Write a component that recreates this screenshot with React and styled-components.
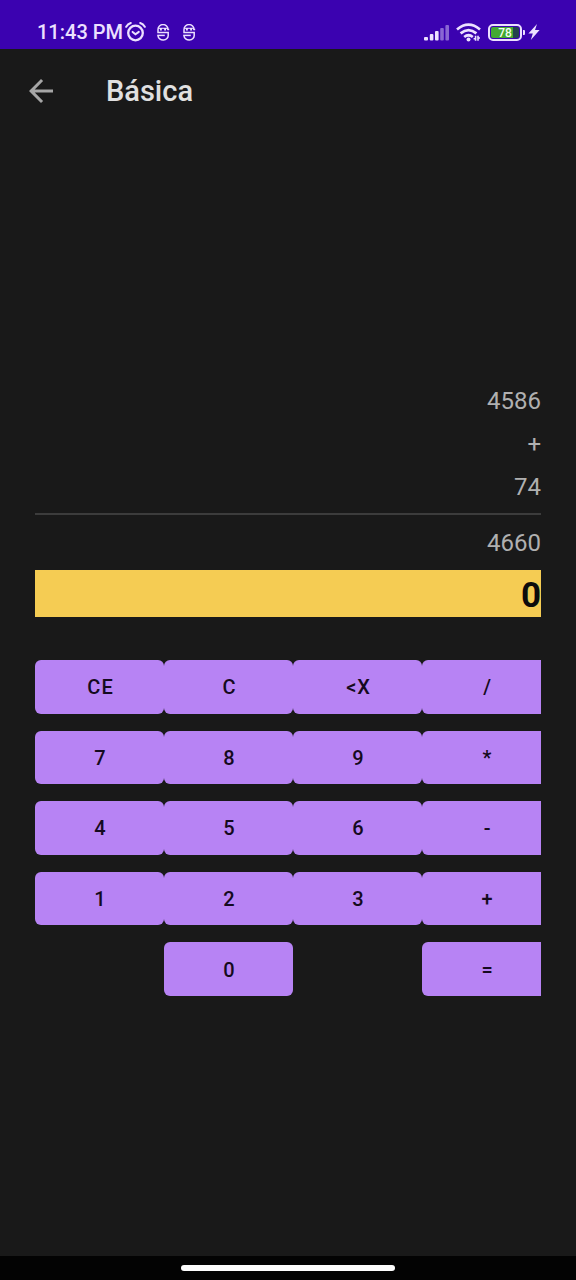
import React from "react";
import styled, { createGlobalStyle } from "styled-components";

const GlobalStyle = createGlobalStyle`
  *, *::before, *::after { box-sizing: border-box; }
  body {
    margin: 0;
    background: #191919;
    font-family: Roboto, "Liberation Sans", sans-serif;
  }
`;

const Screen = styled.div`
  display: flex;
  flex-direction: column;
  min-height: 100vh;
  background: #191919;
`;

const StatusBar = styled.div`
  display: flex;
  align-items: center;
  justify-content: space-between;
  height: 49px;
  padding: 15px 36px 0 37px;
  background: #3b02b0;
  color: #ece0ff;
`;

const StatusGroup = styled.div`
  display: flex;
  align-items: center;
  gap: ${(p) => p.$gap}px;
`;

const Clock = styled.time`
  font-size: 20px;
  font-weight: 500;
  line-height: 24px;
  margin-right: 2px;
`;

const Notifications = styled.div`
  display: flex;
  gap: 12px;
  margin-left: 10px;
`;

const Icon = styled.svg`
  display: block;
  flex: none;
`;

const BatteryShell = styled.div`
  display: flex;
  align-items: center;
  gap: 1px;

  &::after {
    content: "";
    width: 2px;
    height: 5px;
    border-radius: 0 1px 1px 0;
    background: #ece0ff;
  }
`;

const BatteryBody = styled.div`
  width: 34px;
  height: 17px;
  padding: 1px;
  border: 2px solid #ece0ff;
  border-radius: 5px;
`;

const BatteryLevel = styled.div`
  height: 100%;
  border-radius: 2px;
  background: linear-gradient(to right, #43a832 78%, #24424a 78%);
  color: #f4fff0;
  font-size: 12px;
  font-weight: 500;
  line-height: 12px;
  text-align: center;
`;

const AppBar = styled.header`
  display: flex;
  align-items: center;
  gap: 47px;
  height: 83px;
  padding: 0 23px;
`;

const BackButton = styled.button`
  padding: 0;
  border: 0;
  background: none;
  color: #a6a6a6;
  cursor: pointer;
`;

const Title = styled.h1`
  margin: 0;
  color: #e0e0e0;
  font-size: 29px;
  font-weight: 500;
  line-height: 38px;
`;

const Calculator = styled.main`
  flex: 1;
  padding: 248px 35px 40px;
`;

const Tape = styled.div`
  padding-bottom: 4px;
  border-bottom: 2px solid #3c3c3c;
`;

const TapeLine = styled.div`
  color: #b0b0b0;
  font-size: 24px;
  line-height: 43px;
  text-align: right;
`;

const Total = styled(TapeLine)`
  padding: 7px 0 5px;
`;

const Entry = styled.output`
  display: block;
  height: 47px;
  background: #f5cc53;
  color: #0c0c0c;
  font-size: 35px;
  font-weight: 700;
  line-height: 51px;
  text-align: right;
`;

const Keypad = styled.div`
  display: grid;
  grid-template-columns: repeat(4, 25.5%);
  grid-template-rows: repeat(5, 1fr);
  row-gap: 17px;
  height: 336px;
  margin-top: 43px;
  overflow: hidden;
`;

const Key = styled.button`
  grid-column: ${(p) => p.$column};
  padding: 1px 0 0 2px;
  border: 0;
  border-radius: 6px;
  background: #b783f4;
  color: #150a20;
  font-family: inherit;
  font-size: 20px;
  font-weight: 500;
  line-height: 24px;
  letter-spacing: 1px;
  cursor: pointer;
`;

const NavigationBar = styled.footer`
  display: flex;
  align-items: center;
  justify-content: center;
  height: 24px;
  background: #030303;
`;

const HomeHandle = styled.div`
  width: 37%;
  height: 6px;
  border-radius: 3px;
  background: #fdfdfd;
`;

const keyRows = [
  ["CE", "C", "<X", "/"],
  ["7", "8", "9", "*"],
  ["4", "5", "6", "-"],
  ["1", "2", "3", "+"],
  [null, "0", null, "="],
];

const AlarmIcon = () => (
  <Icon width="21" height="21" viewBox="0 0 21 21" fill="none" stroke="currentColor" strokeLinecap="round" aria-hidden="true">
    <circle cx="10.5" cy="11" r="7.3" strokeWidth="2.3" />
    <path d="M1.2 4.8Q2.8 2 5.8 1M15.2 1Q18.2 2 19.8 4.8" strokeWidth="2" />
    <path d="M7.6 9.9l2.9 2.4 3.3-2.4" strokeWidth="2" />
  </Icon>
);

const MaskIcon = () => (
  <Icon width="14" height="17" viewBox="0 0 14 17" fill="none" stroke="currentColor" strokeWidth="1.5" aria-hidden="true">
    <path d="M12 6V5.6a5 5 0 0 0-10 0v2.9h10.2v2.6a5.1 4.7 0 0 1-10.2 0.6" />
    <path d="M1.2 11.4h7.6" />
    <path d="M2.2 4.3h9.6" strokeWidth="1.1" />
    <path d="M4.9 4v2.4M9.1 4v2.4" strokeWidth="1.9" />
    <path d="M11.4 5.5h1.8" />
  </Icon>
);

const SignalIcon = () => (
  <Icon width="26" height="17" viewBox="0 0 26 17" fill="currentColor" aria-hidden="true">
    <rect x="0" y="13" width="4" height="3.6" rx="1" />
    <rect x="5.8" y="10" width="3.6" height="6.6" rx="1" />
    <rect x="11" y="7" width="3.6" height="9.6" rx="1" />
    <rect x="16.2" y="4" width="3.6" height="12.6" rx="1" opacity=".45" />
    <rect x="21.4" y="1" width="3.6" height="15.6" rx="1" opacity=".45" />
  </Icon>
);

const WifiIcon = () => (
  <Icon width="26" height="19" viewBox="0 0 26 19" aria-hidden="true">
    <g fill="none" stroke="currentColor" strokeWidth="2.7">
      <path d="M1 6.5Q12.5-3.2 24 6.5" />
      <path d="M4.6 10.4Q12.5 3.7 20.4 10.4" />
      <path d="M8.2 14Q12.5 10.5 16.8 14" />
    </g>
    <circle cx="12.5" cy="16.4" r="2" fill="currentColor" />
    <path d="M19.6 12.8v5M17.6 15.8h2M22 12.8v5M22 15h2" fill="none" stroke="currentColor" strokeWidth="1.6" />
  </Icon>
);

const BoltIcon = () => (
  <Icon width="12" height="16" viewBox="0 0 12 16" fill="currentColor" aria-hidden="true">
    <path d="M9 0L0.4 9.4h4.4L2.8 16l8.8-10H7z" />
  </Icon>
);

const BackIcon = () => (
  <Icon width="36" height="36" viewBox="0 0 24 24" fill="currentColor" aria-hidden="true">
    <path d="M20 11H7.83l5.59-5.59L12 4l-8 8 8 8 1.41-1.41L7.83 13H20v-2z" />
  </Icon>
);

export default function App() {
  return (
    <Screen>
      <GlobalStyle />
      <StatusBar>
        <StatusGroup $gap={0}>
          <Clock>11:43 PM</Clock>
          <AlarmIcon />
          <Notifications>
            <MaskIcon />
            <MaskIcon />
          </Notifications>
        </StatusGroup>
        <StatusGroup $gap={6}>
          <SignalIcon />
          <WifiIcon />
          <StatusGroup $gap={3}>
            <BatteryShell>
              <BatteryBody>
                <BatteryLevel>78</BatteryLevel>
              </BatteryBody>
            </BatteryShell>
            <BoltIcon />
          </StatusGroup>
        </StatusGroup>
      </StatusBar>
      <AppBar>
        <BackButton type="button" aria-label="Volver">
          <BackIcon />
        </BackButton>
        <Title>Básica</Title>
      </AppBar>
      <Calculator>
        <Tape>
          <TapeLine>4586</TapeLine>
          <TapeLine>+</TapeLine>
          <TapeLine>74</TapeLine>
        </Tape>
        <Total>4660</Total>
        <Entry>0</Entry>
        <Keypad>
          {keyRows.map((row) =>
            row.map(
              (label, column) =>
                label && (
                  <Key key={label} type="button" $column={column + 1}>
                    {label}
                  </Key>
                )
            )
          )}
        </Keypad>
      </Calculator>
      <NavigationBar>
        <HomeHandle />
      </NavigationBar>
    </Screen>
  );
}
